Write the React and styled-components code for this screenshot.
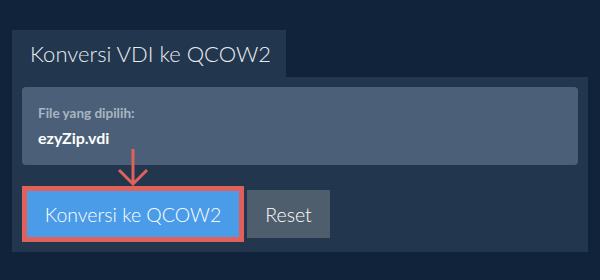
import React from "react";
import styled, { createGlobalStyle } from "styled-components";

const Global = createGlobalStyle`
  html, body { margin: 0; padding: 0; background: #11233a; }
  body { font-family: Lato, "Open Sans", sans-serif; }
  * { box-sizing: border-box; }
`;

const Page = styled.div`
  width: 600px;
  height: 280px;
  padding: 30px 12px 0 12px;
`;

const Tab = styled.div`
  display: flex;
  align-items: center;
  width: 274px;
  height: 47px;
  padding: 0 18px;
  background: #22364d;
  color: #e8edf2;
  font-size: 22px;
  font-weight: 300;
  white-space: nowrap;
`;

const Panel = styled.div`
  background: #22364d;
  height: 175px;
  padding: 10px;
  position: relative;
`;

const FileBox = styled.div`
  background: #4b6078;
  height: 78px;
  border-radius: 4px;
  padding: 18px 16px;
  display: flex;
  flex-direction: column;
  gap: 8px;
`;

const Label = styled.div`
  color: #a9b5c3;
  font-size: 13.5px;
  font-weight: 700;
  line-height: 16px;
`;

const FileName = styled.div`
  color: #ffffff;
  font-size: 16px;
  font-weight: 700;
  line-height: 18px;
`;

const Actions = styled.div`
  display: flex;
  align-items: center;
  gap: 3px;
  margin-top: 21px;
`;

const Highlight = styled.div`
  border: 5px solid #e0605c;
  position: relative;
`;

const Button = styled.button`
  font-family: Lato, "Open Sans", sans-serif;
  font-size: 19.5px;
  font-weight: 300;
  color: #ffffff;
  border: none;
  border-radius: 0;
  background: ${(p) => (p.$primary ? "#4a9be8" : "#4f5e6d")};
  height: ${(p) => (p.$primary ? "46px" : "48px")};
  width: ${(p) => (p.$primary ? "212px" : "83px")};
  padding: 0;
  display: flex;
  align-items: center;
  justify-content: center;
  cursor: pointer;
`;

const Arrow = styled.svg`
  position: absolute;
  left: 90px;
  top: -43px;
`;

export default function App() {
  return (
    <>
      <Global />
      <Page>
        <Tab>Konversi VDI ke QCOW2</Tab>
        <Panel>
          <FileBox>
            <Label>File yang dipilih:</Label>
            <FileName>ezyZip.vdi</FileName>
          </FileBox>
          <Actions>
            <Highlight>
              <Arrow width="32" height="38" viewBox="0 0 32 38">
                <path
                  d="M16 1 V36 M2 22 L16 36 L30 22"
                  fill="none"
                  stroke="#e0605c"
                  strokeWidth="3"
                />
              </Arrow>
              <Button $primary>Konversi ke QCOW2</Button>
            </Highlight>
            <Button>Reset</Button>
          </Actions>
        </Panel>
      </Page>
    </>
  );
}
